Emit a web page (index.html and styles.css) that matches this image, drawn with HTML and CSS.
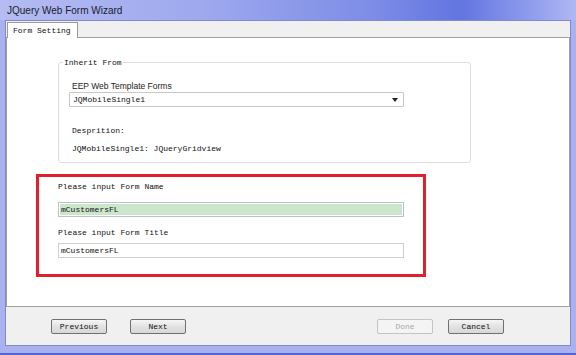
FILE: index.html
```html
<!DOCTYPE html>
<html>
	<head>
		<meta charset="UTF-8">
		<title>JQuery Web Form Wizard</title>
		<link rel="stylesheet" href="styles.css">
	</head>
	<body>
		<div class="win">
			<div class="win-title">JQuery Web Form Wizard</div>
			<div class="win-client">
				<div class="tabs">
					<div class="tabs-item">Form Setting</div>
				</div>
				<div class="panel">
					<fieldset class="group">
						<legend class="group-legend">Inherit From</legend>
						<div class="group-label">EEP Web Template Forms</div>
						<div class="combo">
							<span class="combo-text">JQMobileSingle1</span>
							<span class="combo-arrow"></span>
						</div>
						<div class="group-desc">Desprition:</div>
						<div class="group-value">JQMobileSingle1: JQueryGridview</div>
					</fieldset>
					<div class="mark">
						<div class="mark-label">Please input Form Name</div>
						<div class="field field-active">mCustomersFL</div>
						<div class="mark-label mark-label-2">Please input Form Title</div>
						<div class="field">mCustomersFL</div>
					</div>
				</div>
				<div class="foot">
					<div class="btn">Previous</div>
					<div class="btn btn-next">Next</div>
					<div class="btn btn-done">Done</div>
					<div class="btn btn-cancel">Cancel</div>
				</div>
			</div>
		</div>
	</body>
</html>
```

FILE: styles.css
```css
body{margin: 0px; width: 576px; height: 355px; overflow: hidden; font-family: "Liberation Mono", monospace; font-size: 8px; color: #111111;}
.win{display: flex; flex-direction: column; height: 355px; box-sizing: border-box; padding: 0px 5px 7px 5px; background: #a9b2ee; border-bottom: 2px solid #5563d6;}
.win-title{height: 20px; margin: 0px -5px; padding-left: 7px; display: flex; align-items: center; font-family: "Liberation Sans", sans-serif; font-size: 10px; color: #1b1b2e; background: linear-gradient(to right, #b4bcf2 0%, #9ea9ee 35%, #7d8ce6 65%, #6275e0 80%, #9aa6f0 95%, #b0b8f2 100%);}
.win-client{flex: 1; display: flex; flex-direction: column; background: #f0f0f0; border: 1px solid #7e89cf;}
.tabs{height: 16px; display: flex; align-items: flex-end; padding-left: 1px;}
.tabs-item{height: 15px; padding: 0px 6px 0px 5px; display: flex; align-items: center; background: #ffffff; border: 1px solid #9a9a9a; border-bottom: none; margin-bottom: -1px; position: relative; z-index: 1;}
.panel{height: 270px; background: #ffffff; border: 1px solid #a0a0a0; padding: 20px 0px 0px 29px; box-sizing: border-box;}
.group{width: 413px; height: 105px; box-sizing: border-box; margin: 0px 0px 0px 22px; padding: 0px 0px 0px 13px; border: 1px solid #dedede; border-radius: 3px;}
.group-legend{padding: 0px 1px; margin-left: -9px;}
.group-label{margin-top: 14px; font-family: "Liberation Sans", sans-serif; font-size: 8.5px; color: #222222;}
.combo{width: 335px; height: 15px; margin-top: 1px; margin-left: -3px; box-sizing: border-box; border: 1px solid #c8c8c8; border-radius: 1px; display: flex; align-items: center; padding: 0px 5px 0px 3px;}
.combo-text{flex: 1;}
.combo-arrow{width: 0px; height: 0px; border-left: 3px solid transparent; border-right: 3px solid transparent; border-top: 4px solid #222222;}
.group-desc{margin-top: 19px;}
.group-value{margin-top: 9px;}
.mark{width: 390px; height: 103px; margin-top: 11px; margin-left: 0px; box-sizing: border-box; border: 3px solid #e2202b; padding: 3px 0px 0px 19px;}
.mark-label{height: 12px; display: flex; align-items: center;}
.mark-label-2{margin-top: 9px;}
.field{width: 346px; height: 15px; box-sizing: border-box; margin-top: 5px; padding-left: 2px; display: flex; align-items: center; border: 1px solid #cfcfcf; background: #ffffff;}
.field-active{margin-top: 10px; background: #cce6cc; border-color: #b8c4c8; box-shadow: inset 0px 0px 0px 1px #ffffff;}
.foot{flex: 1; display: flex; align-items: center; padding: 0px 66px 0px 45px;}
.btn{width: 56px; height: 15px; box-sizing: border-box; display: flex; justify-content: center; align-items: center; border: 1px solid #707070; border-radius: 2px; background: linear-gradient(#f6f6f6, #e2e2e2 50%, #d8d8d8);}
.btn-next{margin-left: 23px;}
.btn-done{margin-left: auto; color: #a8a8a8; border-color: #c4c4c4; background: #f4f4f4;}
.btn-cancel{margin-left: 15px;}
```
